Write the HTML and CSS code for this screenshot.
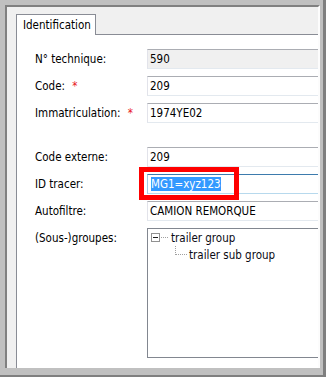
FILE: index.html
```html
<!DOCTYPE html>
<html lang="fr">
<head>
    <meta charset="UTF-8">
    <meta name="viewport" content="width=device-width, initial-scale=1.0">
    <title>Identification</title>
    <link rel="stylesheet" href="styles.css">
</head>
<body>
    <div class="screen">
        <div class="window">
            <div class="tab">Identification</div>
            <div class="panel">
                <div class="form-group">
                    <label class="field-label">N° technique:</label>
                    <div class="field field-readonly">590</div>

                    <label class="field-label">Code: <span class="required">*</span></label>
                    <div class="field">209</div>

                    <label class="field-label">Immatriculation: <span class="required">*</span></label>
                    <div class="field">1974YE02</div>
                </div>

                <div class="form-group">
                    <label class="field-label">Code externe:</label>
                    <div class="field">209</div>

                    <label class="field-label">ID tracer:</label>
                    <div class="field field-focus">
                        <span class="selection">MG1=xyz123</span>
                        <div class="highlight-box"></div>
                    </div>

                    <label class="field-label">Autofiltre:</label>
                    <div class="field">CAMION REMORQUE</div>

                    <label class="field-label field-label-top">(Sous-)groupes:</label>
                    <div class="tree">
                        <div class="tree-item">
                            <svg class="tree-toggle" width="19" height="9" viewBox="0 0 19 9">
                                <rect x="0.5" y="0.5" width="8" height="8" fill="#fff" stroke="#919191"/>
                                <line x1="2" y1="4.5" x2="7" y2="4.5" stroke="#1e1e1e"/>
                                <line x1="10" y1="4.5" x2="18" y2="4.5" stroke="#a0a0a0" stroke-dasharray="1 1"/>
                            </svg>
                            <span>trailer group</span>
                        </div>
                        <div class="tree-item tree-child">
                            <svg class="tree-branch" width="14" height="17" viewBox="0 0 14 17">
                                <line x1="0.5" y1="0" x2="0.5" y2="9" stroke="#a0a0a0" stroke-dasharray="1 1"/>
                                <line x1="1" y1="8.5" x2="13" y2="8.5" stroke="#a0a0a0" stroke-dasharray="1 1"/>
                            </svg>
                            <span>trailer sub group</span>
                        </div>
                    </div>
                </div>
            </div>
        </div>
    </div>
</body>
</html>
```

FILE: styles.css
```css
body {
    margin: 0;
    font-family: "DejaVu Sans Condensed", "DejaVu Sans", "Liberation Sans", sans-serif;
    font-stretch: condensed;
    font-size: 11.5px;
    color: #000;
}
.screen {
    width: 326px;
    height: 377px;
    box-sizing: border-box;
    background-color: #c0c0c0;
    border-right: 3px solid #7f7f7f;
    border-bottom: 2px solid #7f7f7f;
    padding: 5px 3px 7px 5px;
}
.window {
    height: 100%;
    box-sizing: border-box;
    background-color: #f0f0f0;
    border-top: 2px solid #808080;
    border-left: 2px solid #808080;
    border-right: 2px solid #fcfcfc;
    padding: 7px 0 0 9px;
    display: flex;
    flex-direction: column;
    align-items: flex-start;
    overflow: hidden;
}
.tab {
    position: relative;
    z-index: 1;
    width: 72px;
    height: 20px;
    line-height: 20px;
    padding-left: 6px;
    background-color: #fff;
    border: 1px solid #898c95;
    border-bottom: none;
    margin-bottom: -1px;
}
.panel {
    flex: 1;
    width: 400px;
    background-color: #fff;
    border-top: 1px solid #898c95;
    border-left: 1px solid #898c95;
    padding: 14px 0 0 18px;
}
.form-group {
    display: grid;
    grid-template-columns: 112px 1fr;
    row-gap: 7px;
    align-items: center;
}
.form-group + .form-group {
    margin-top: 24px;
}
.field-label {
    line-height: 20px;
}
.field-label-top {
    align-self: start;
}
.required {
    color: #e8131b;
    margin-left: 4px;
}
.field {
    height: 20px;
    box-sizing: border-box;
    line-height: 18px;
    padding-left: 2px;
    background-color: #fff;
    border: 1px solid #e2e3ea;
    border-top-color: #abadb3;
    border-bottom-color: #e3e9ef;
}
.field-readonly {
    background-color: #f0f0f0;
}
.field-focus {
    position: relative;
    border-color: #a4c9e3;
    border-top-color: #3d7bad;
    border-bottom-color: #b7d9ed;
}
.selection {
    display: inline-block;
    margin-left: 1px;
    line-height: 14px;
    background-color: #3399ff;
    color: #fff;
}
.highlight-box {
    position: absolute;
    left: -9px;
    top: -8px;
    width: 90px;
    height: 23px;
    border: 5px solid #f00;
}
.tree {
    height: 130px;
    box-sizing: border-box;
    border: 1px solid #828790;
    padding-left: 3px;
}
.tree-item {
    display: flex;
    align-items: center;
    height: 17px;
    color: #0a0a14;
}
.tree-toggle {
    margin-right: 1px;
}
.tree-child {
    margin-left: 24px;
}
```
